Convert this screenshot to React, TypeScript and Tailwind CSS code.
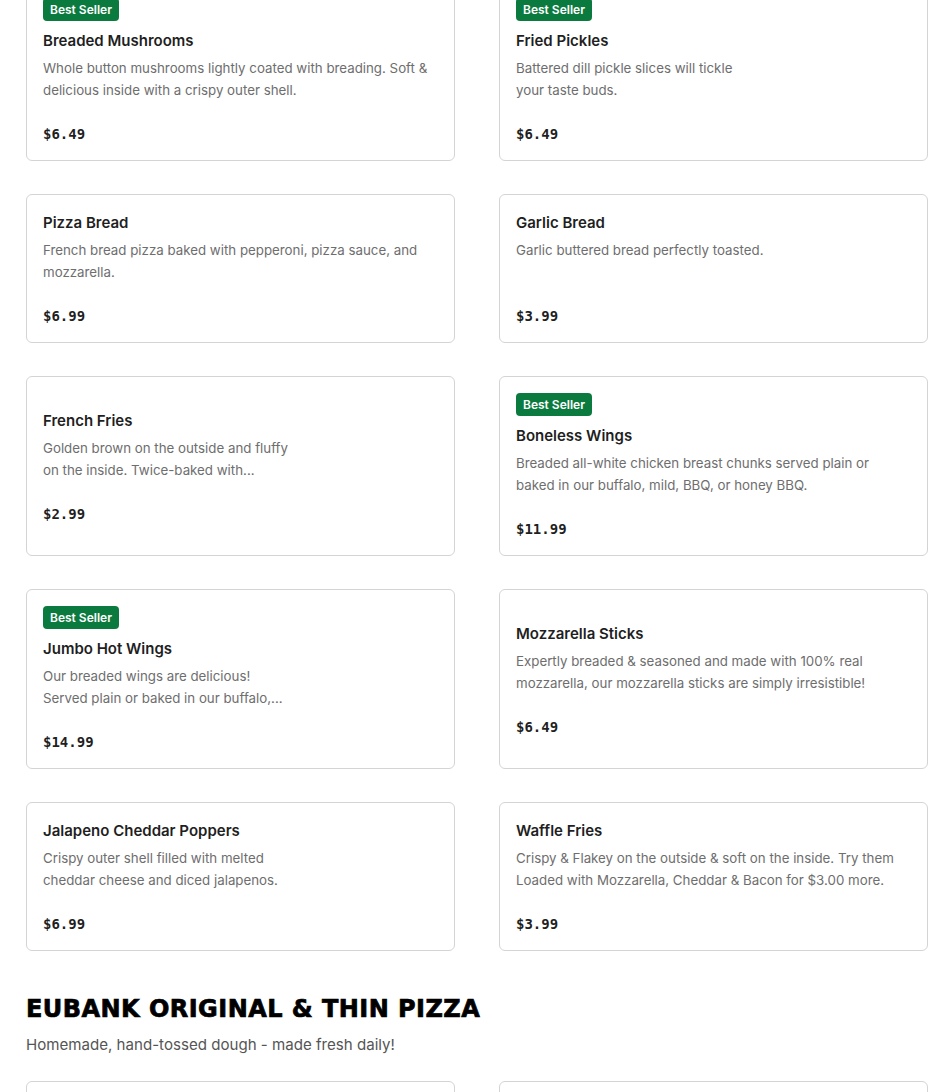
import React from "react";

type Item = {
  name: string;
  desc: React.ReactNode;
  price: string;
  best?: boolean;
};

const items: Item[] = [
  {
    name: "Breaded Mushrooms",
    desc: "Whole button mushrooms lightly coated with breading. Soft & delicious inside with a crispy outer shell.",
    price: "$6.49",
    best: true,
  },
  {
    name: "Fried Pickles",
    desc: (
      <>
        Battered dill pickle slices will tickle
        <br />
        your taste buds.
      </>
    ),
    price: "$6.49",
    best: true,
  },
  {
    name: "Pizza Bread",
    desc: "French bread pizza baked with pepperoni, pizza sauce, and mozzarella.",
    price: "$6.99",
  },
  {
    name: "Garlic Bread",
    desc: "Garlic buttered bread perfectly toasted.",
    price: "$3.99",
  },
  {
    name: "French Fries",
    desc: (
      <>
        Golden brown on the outside and fluffy
        <br />
        on the inside. Twice-baked with...
      </>
    ),
    price: "$2.99",
  },
  {
    name: "Boneless Wings",
    desc: "Breaded all-white chicken breast chunks served plain or baked in our buffalo, mild, BBQ, or honey BBQ.",
    price: "$11.99",
    best: true,
  },
  {
    name: "Jumbo Hot Wings",
    desc: (
      <>
        Our breaded wings are delicious!
        <br />
        Served plain or baked in our buffalo,...
      </>
    ),
    price: "$14.99",
    best: true,
  },
  {
    name: "Mozzarella Sticks",
    desc: "Expertly breaded & seasoned and made with 100% real mozzarella, our mozzarella sticks are simply irresistible!",
    price: "$6.49",
  },
  {
    name: "Jalapeno Cheddar Poppers",
    desc: (
      <>
        Crispy outer shell filled with melted
        <br />
        cheddar cheese and diced jalapenos.
      </>
    ),
    price: "$6.99",
  },
  {
    name: "Waffle Fries",
    desc: "Crispy & Flakey on the outside & soft on the inside. Try them Loaded with Mozzarella, Cheddar & Bacon for $3.00 more.",
    price: "$3.99",
  },
];

function Card({ item }: { item: Item }) {
  return (
    <div className="flex flex-col justify-center rounded-md border border-[#d4d4d4] bg-white px-4 pt-4 pb-[15px]">
      {item.best && (
        <div className="mb-2 self-start rounded-[4px] bg-[#0b7a3e] px-[7px] text-[12px] font-semibold leading-[23px] text-white">
          Best Seller
        </div>
      )}
      <div className="text-[15px] font-semibold leading-6 text-[#1f1f1f]">{item.name}</div>
      <div className="mt-1 h-[44px] overflow-hidden text-[13.3px] leading-[22px] text-[#6e6e6e]">
        {item.desc}
      </div>
      <div className="mt-[23px] font-['DejaVu_Sans_Mono',monospace] text-[14px] font-bold leading-[21px] text-[#1f1f1f]">
        {item.price}
      </div>
    </div>
  );
}

export default function App() {
  return (
    <div className="min-h-[1092px] overflow-hidden bg-white font-['Inter',sans-serif]">
      <div className="ml-[26px] mt-[-19px] w-[902px]">
        <div className="grid grid-cols-2 gap-x-[44px] gap-y-[33px]">
          {items.map((it) => (
            <Card key={it.name} item={it} />
          ))}
        </div>
        <h2 className="mt-[42px] font-['DejaVu_Sans',sans-serif] text-[24px] font-bold uppercase leading-8 tracking-[0.45px] text-black [-webkit-text-stroke:0.7px_black]">
          Eubank Original &amp; Thin Pizza
        </h2>
        <p className="mt-2 text-[15.1px] leading-6 text-[#555555]">
          Homemade, hand-tossed dough - made fresh daily!
        </p>
        <div className="mt-6 grid grid-cols-2 gap-x-[44px]">
          <div className="h-[120px] rounded-md border border-[#d4d4d4]" />
          <div className="h-[120px] rounded-md border border-[#d4d4d4]" />
        </div>
      </div>
    </div>
  );
}
